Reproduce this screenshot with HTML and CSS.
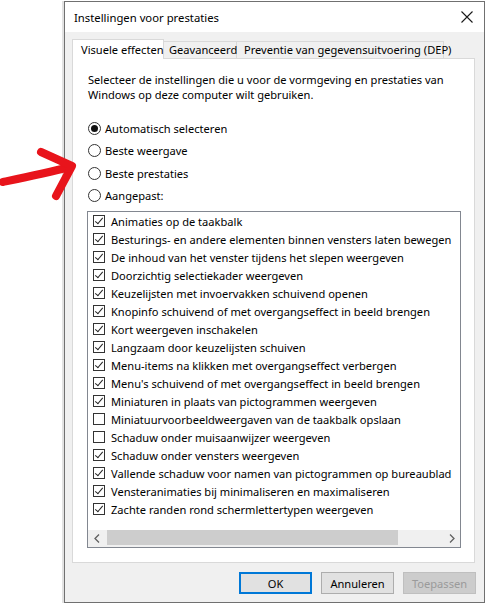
FILE: index.html
```html
<!DOCTYPE html>
<html lang="nl">
<head>
<meta charset="utf-8">
<title>Instellingen voor prestaties</title>
<link rel="stylesheet" href="styles.css">
</head>
<body>
<div class="desk">
  <div class="window">
    <div class="titlebar">
      <span class="title">Instellingen voor prestaties</span>
      <svg class="close" width="12" height="12" viewBox="0 0 12 12"><path d="M0.5 0.5 L11.5 11.5 M11.5 0.5 L0.5 11.5" stroke="#1a1a1a" stroke-width="1.1" fill="none"/></svg>
    </div>
    <div class="body">
      <div class="tabs">
        <div class="tab active">Visuele effecten</div>
        <div class="tab t2">Geavanceerd</div>
        <div class="tab t3">Preventie van gegevensuitvoering (DEP)</div>
      </div>
      <div class="panel">
        <p class="intro">Selecteer de instellingen die u voor de vormgeving en prestaties van Windows op deze computer wilt gebruiken.</p>
        <div class="radios">
          <div class="radio checked"><span class="rb"></span>Automatisch selecteren</div>
          <div class="radio"><span class="rb"></span>Beste weergave</div>
          <div class="radio"><span class="rb"></span>Beste prestaties</div>
          <div class="radio"><span class="rb"></span>Aangepast:</div>
        </div>
        <div class="listbox">
          <div class="items">
            <div class="item on"><span class="cb"></span>Animaties op de taakbalk</div>
            <div class="item on"><span class="cb"></span>Besturings- en andere elementen binnen vensters laten bewegen</div>
            <div class="item on"><span class="cb"></span>De inhoud van het venster tijdens het slepen weergeven</div>
            <div class="item on"><span class="cb"></span>Doorzichtig selectiekader weergeven</div>
            <div class="item on"><span class="cb"></span>Keuzelijsten met invoervakken schuivend openen</div>
            <div class="item on"><span class="cb"></span>Knopinfo schuivend of met overgangseffect in beeld brengen</div>
            <div class="item on"><span class="cb"></span>Kort weergeven inschakelen</div>
            <div class="item on"><span class="cb"></span>Langzaam door keuzelijsten schuiven</div>
            <div class="item on"><span class="cb"></span>Menu-items na klikken met overgangseffect verbergen</div>
            <div class="item on"><span class="cb"></span>Menu's schuivend of met overgangseffect in beeld brengen</div>
            <div class="item on"><span class="cb"></span>Miniaturen in plaats van pictogrammen weergeven</div>
            <div class="item"><span class="cb"></span>Miniatuurvoorbeeldweergaven van de taakbalk opslaan</div>
            <div class="item"><span class="cb"></span>Schaduw onder muisaanwijzer weergeven</div>
            <div class="item on"><span class="cb"></span>Schaduw onder vensters weergeven</div>
            <div class="item on"><span class="cb"></span>Vallende schaduw voor namen van pictogrammen op bureaublad</div>
            <div class="item on"><span class="cb"></span>Vensteranimaties bij minimaliseren en maximaliseren</div>
            <div class="item on"><span class="cb"></span>Zachte randen rond schermlettertypen weergeven</div>
          </div>
          <div class="hscroll">
            <span class="arrow"><svg width="6" height="9" viewBox="0 0 6 9"><path d="M5 0.5 L1 4.5 L5 8.5" stroke="#606060" stroke-width="1.3" fill="none"/></svg></span>
            <span class="track"><span class="thumb"></span></span>
            <span class="arrow"><svg width="6" height="9" viewBox="0 0 6 9"><path d="M1 0.5 L5 4.5 L1 8.5" stroke="#606060" stroke-width="1.3" fill="none"/></svg></span>
          </div>
        </div>
      </div>
      <div class="buttons">
        <div class="btn default">OK</div>
        <div class="btn">Annuleren</div>
        <div class="btn disabled">Toepassen</div>
      </div>
    </div>
  </div>
  <svg class="redarrow" width="90" height="70" viewBox="0 0 90 70">
    <path d="M3 41 C22 37 46 32 70 26" stroke="#e8141b" stroke-width="8" fill="none" stroke-linecap="round" stroke-linejoin="round"/>
    <path d="M41 11 L72 25 L56 55" stroke="#e8141b" stroke-width="8" fill="none" stroke-linecap="round" stroke-linejoin="round"/>
  </svg>
</div>
</body>
</html>
```
FILE: styles.css
```css
html, body {
  margin: 0;
  padding: 0;
  background: #ffffff;
}
body {
  font-family: "Noto Sans", "Open Sans", "Liberation Sans", sans-serif;
  font-size: 11.1px;
  color: #000;
}
.desk {
  position: relative;
  padding: 1px 0 0 64px;
}
.window {
  width: 419px;
  height: 600px;
  border: 1px solid #707070;
  background: #f0f0f0;
  display: flex;
  flex-direction: column;
  box-shadow: -2px 0 0 #e2e2e2;
}
.titlebar {
  height: 30px;
  flex: none;
  background: #fff;
  display: flex;
  align-items: center;
  justify-content: space-between;
  padding: 0 11px 0 9px;
}
.title {
  font-size: 11.3px;
}
.close {
  display: block;
}
.body {
  flex: 1;
  display: flex;
  flex-direction: column;
  padding: 7px 9px 8px 7px;
}
.tabs {
  display: flex;
  height: 19px;
  flex: none;
  position: relative;
  z-index: 1;
}
.tab {
  box-sizing: border-box;
  border: 1px solid #d9d9d9;
  border-bottom: none;
  background: #f0f0f0;
  margin-top: 2px;
  height: 17px;
  line-height: 16px;
  padding: 0 5px;
  white-space: nowrap;
}
.tab.active {
  background: #fff;
  margin-top: 0;
  height: 20px;
  line-height: 20px;
  padding: 0 7px 0 8px;
  width: 92px;
}
.tab.t2 {
  border-left: none;
  width: 73px;
}
.tab.t3 {
  border-left: none;
  width: 207px;
  padding-left: 7px;
}
.panel {
  flex: 1;
  background: #fff;
  border: 1px solid #d9d9d9;
  padding: 13px 13px 0 15px;
  display: flex;
  flex-direction: column;
}
.intro {
  margin: 0;
  line-height: 15px;
}
.radios {
  margin-top: 15px;
}
.radio {
  height: 22.5px;
  display: flex;
  align-items: center;
}
.rb {
  box-sizing: border-box;
  width: 13px;
  height: 13px;
  border: 1px solid #333;
  border-radius: 50%;
  margin-right: 4px;
  position: relative;
  flex: none;
}
.radio.checked .rb::after {
  content: "";
  position: absolute;
  left: 2px;
  top: 2px;
  width: 7px;
  height: 7px;
  border-radius: 50%;
  background: #111;
}
.listbox {
  margin: 4px 0 0 -1px;
  width: 374px;
  height: 337px;
  box-sizing: border-box;
  border: 1px solid #828790;
  display: flex;
  flex-direction: column;
}
.items {
  flex: 1;
}
.item {
  height: 18px;
  display: flex;
  align-items: center;
  padding-left: 5px;
  white-space: nowrap;
}
.cb {
  box-sizing: border-box;
  width: 12px;
  height: 12px;
  border: 1px solid #333;
  margin-right: 6px;
  position: relative;
  flex: none;
}
.item.on .cb::after {
  content: "";
  position: absolute;
  left: 3px;
  top: 0px;
  width: 3px;
  height: 7px;
  border-right: 1.3px solid #222;
  border-bottom: 1.3px solid #222;
  transform: rotate(40deg);
}
.hscroll {
  height: 17px;
  display: flex;
  background: #f0f0f0;
  flex: none;
}
.arrow {
  width: 17px;
  display: flex;
  align-items: center;
  justify-content: center;
}
.track {
  flex: 1;
  display: flex;
  align-items: stretch;
  padding: 0 0 2px 2px;
}
.thumb {
  width: 291px;
  background: #cdcdcd;
}
.buttons {
  flex: none;
  display: flex;
  justify-content: flex-end;
  gap: 9px;
  margin-top: 9px;
  margin-right: -1px;
}
.btn {
  box-sizing: border-box;
  width: 73px;
  height: 22px;
  border: 1px solid #adadad;
  background: #e1e1e1;
  display: flex;
  align-items: center;
  justify-content: center;
}
.btn.default {
  border: 2px solid #0078d7;
}
.btn.disabled {
  background: #cccccc;
  border-color: #bfbfbf;
  color: #9a9a9a;
}
.redarrow {
  position: absolute;
  left: 0;
  top: 141px;
}
```
